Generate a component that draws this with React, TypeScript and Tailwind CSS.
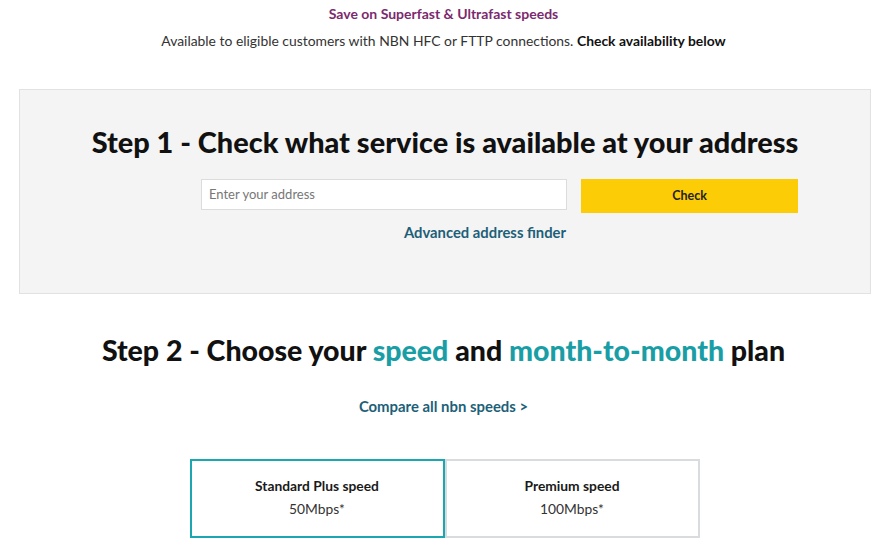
import React from "react";

const font = { fontFamily: "Lato, 'Noto Sans', sans-serif" };

const SpeedCard = ({ title, speed, active }: { title: string; speed: string; active?: boolean }) => (
  <div
    className={`w-[255px] h-[79px] flex flex-col items-center justify-center border-2 bg-white pb-[3px] ${
      active ? "border-[#1ba7b0]" : "border-[#d8dcdf]"
    }`}
  >
    <div className="text-[13.8px] font-bold text-[#1a1a1a] leading-[17px]">{title}</div>
    <div className="text-[13.8px] text-[#333] leading-[17px] mt-[6px]">{speed}</div>
  </div>
);

export default function App() {
  return (
    <div className="w-[887px] h-[550px] bg-white overflow-hidden" style={font}>
      <div className="pt-[5px] text-center">
        <div className="text-[14px] font-bold text-[#7b2a6e] leading-[17px]">
          Save on Superfast &amp; Ultrafast speeds
        </div>
        <div className="mt-[10px] text-[13.9px] text-[#333] leading-[17px]">
          Available to eligible customers with NBN HFC or FTTP connections.{" "}
          <span className="font-bold text-[#111]">Check availability below</span>
        </div>
      </div>

      <div className="mt-[40px] ml-[19px] mr-[16px] h-[205px] bg-[#f4f4f4] border border-[#e2e2e2] pt-[35px]">
        <h1 className="text-center text-[28.9px] font-black text-[#111] leading-[34px]">
          Step 1 - Check what service is available at your address
        </h1>
        <div className="flex items-start gap-[14px] pl-[181px] mt-[20px]">
          <div className="w-[366px] h-[31px] bg-white border border-[#dcdcdc] flex items-center px-[7px]">
            <span className="text-[13px] text-[#777]">Enter your address</span>
          </div>
          <div className="w-[217px] h-[34px] bg-[#fccc06] flex items-center justify-center">
            <span className="text-[12.5px] font-bold text-[#222]">Check</span>
          </div>
        </div>
        <div className="mt-[10px] text-center pl-[80px] text-[14.8px] font-bold text-[#1d5f78] leading-[18px]">
          Advanced address finder
        </div>
      </div>

      <h2 className="mt-[39px] text-center text-[28.5px] font-black text-[#111] leading-[34px]">
        Step 2 - Choose your <span className="text-[#1a9ea6]">speed</span> and{" "}
        <span className="text-[#1a9ea6]">month-to-month</span> plan
      </h2>
      <div className="mt-[30px] text-center text-[14.9px] font-bold text-[#1d5f78] leading-[18px]">
        Compare all nbn speeds &gt;
      </div>

      <div className="mt-[44px] flex justify-center pl-[2px]">
        <SpeedCard title="Standard Plus speed" speed="50Mbps*" active />
        <SpeedCard title="Premium speed" speed="100Mbps*" />
      </div>
    </div>
  );
}
